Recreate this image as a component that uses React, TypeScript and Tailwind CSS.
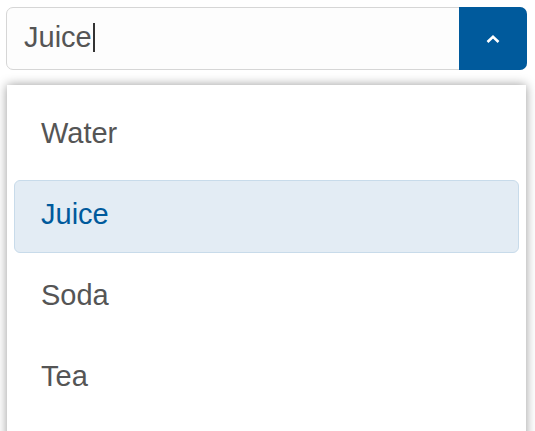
import React, { useState } from 'react';

const drinks = ['Water', 'Juice', 'Soda', 'Tea'];

export default function App() {
  const [selected, setSelected] = useState('Juice');

  return (
    <div className="h-[431px] bg-white pl-[6px] pr-[8px] pt-[7px] overflow-hidden" style={{ fontFamily: '"Liberation Sans", Arial, sans-serif' }}>
      {/* combobox input */}
      <div className="flex h-[63px] rounded-[7px] border border-[#d6d6d6] bg-[#fdfdfd]">
        <div className="flex flex-1 items-center pl-[17px] pb-[2px] text-[29px] text-[#555555]">
          <span>{selected}</span>
          <span className="ml-[1px] inline-block h-[29px] w-[2px] bg-[#333333]" />
        </div>
        <button className="flex w-[68px] items-center justify-center rounded-r-[7px] bg-[#005a9c] -my-px -mr-px">
          <svg width="16" height="10" viewBox="0 0 16 10" fill="none">
            <path d="M2.5 8 L8 2.8 L13.5 8" stroke="white" strokeWidth="2.6" />
          </svg>
        </button>
      </div>

      {/* listbox */}
      <div className="mt-[15px] ml-[1px] mr-[1px] flex flex-col gap-[8px] bg-white px-[7px] pt-[14px] pb-10 shadow-[0_0_10px_rgba(0,0,0,0.4)]">
        {drinks.map(d => {
          const active = d === selected;
          return (
            <div
              key={d}
              onClick={() => setSelected(d)}
              className={`flex h-[73px] shrink-0 items-center rounded-[6px] border pl-[26px] pb-[4px] text-[29px] ${
                active ? 'border-[#c8dbea] bg-[#e3ecf4] text-[#005a9c]' : 'border-transparent text-[#555555]'
              }`}
            >
              {d}
            </div>
          );
        })}
      </div>
    </div>
  );
}
